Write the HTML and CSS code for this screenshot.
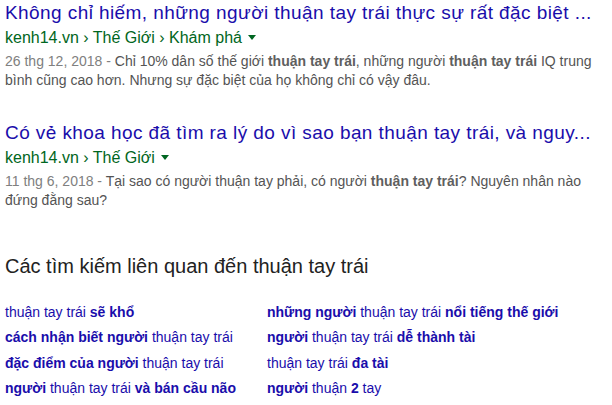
FILE: index.html
```html
<!DOCTYPE html>
<html lang="vi">
<head>
<meta charset="utf-8">
<title>thuận tay trái</title>
<link rel="stylesheet" href="styles.css">
</head>
<body>
<div class="page">
  <div class="result first">
    <a class="title" href="#">Không chỉ hiếm, những người thuận tay trái thực sự rất đặc biệt ...</a>
    <div class="url">kenh14.vn › Thế Giới › Khám phá<span class="caret"></span></div>
    <div class="snippet"><span class="date">26 thg 12, 2018 - </span>Chỉ 10% dân số thế giới <b>thuận tay trái</b>, những người <b>thuận tay trái</b> IQ trung bình cũng cao hơn. Nhưng sự đặc biệt của họ không chỉ có vậy đâu.</div>
  </div>
  <div class="result second">
    <a class="title" href="#">Có vẻ khoa học đã tìm ra lý do vì sao bạn thuận tay trái, và nguy...</a>
    <div class="url">kenh14.vn › Thế Giới<span class="caret"></span></div>
    <div class="snippet"><span class="date">11 thg 6, 2018 - </span>Tại sao có người thuận tay phải, có người <b>thuận tay trái</b>? Nguyên nhân nào đứng đằng sau?</div>
  </div>
  <div class="related">
    <h3 class="related-head">Các tìm kiếm liên quan đến thuận tay trái</h3>
    <div class="related-grid">
      <a href="#">thuận tay trái <b>sẽ khổ</b></a>
      <a href="#"><b>những người</b> thuận tay trái <b>nổi tiếng thế giới</b></a>
      <a href="#"><b>cách nhận biết người</b> thuận tay trái</a>
      <a href="#"><b>người</b> thuận tay trái <b>dễ thành tài</b></a>
      <a href="#"><b>đặc điểm của người</b> thuận tay trái</a>
      <a href="#">thuận tay trái <b>đa tài</b></a>
      <a href="#"><b>người</b> thuận tay trái <b>và bán cầu não</b></a>
      <a href="#"><b>người</b> thuận <b>2</b> tay</a>
    </div>
  </div>
</div>
</body>
</html>
```

FILE: styles.css
```css
html, body {
  margin: 0;
  padding: 0;
  background: #fff;
}
body {
  font-family: "Liberation Sans", Arial, sans-serif;
  width: 612px;
  height: 405px;
  overflow: hidden;
}
.page {
  padding: 1px 0 0 5px;
}
.result {
  display: flex;
  flex-direction: column;
  width: 600px;
}
.result.second {
  margin-top: 31px;
}
.title {
  font-size: 19px;
  letter-spacing: 0.42px;
  line-height: 24px;
  color: #1a0dab;
  text-decoration: none;
  white-space: nowrap;
}
.url {
  margin-top: 1px;
  font-size: 16px;
  line-height: 24px;
  color: #006621;
  white-space: nowrap;
}
.caret {
  display: inline-block;
  width: 0;
  height: 0;
  border-left: 4px solid transparent;
  border-right: 4px solid transparent;
  border-top: 5px solid #006621;
  margin-left: 6px;
  vertical-align: middle;
  position: relative;
  top: -1px;
}
.snippet {
  margin-top: 2px;
  font-size: 14px;
  line-height: 19px;
  color: #545454;
  width: 592px;
}
.snippet b {
  color: #5f5f5f;
}
.date {
  color: #808080;
}
.related {
  margin-top: 43px;
}
.related-head {
  margin: 0;
  font-size: 20px;
  font-weight: normal;
  line-height: 26px;
  color: #222;
}
.related-grid {
  margin-top: 21px;
  display: grid;
  grid-template-columns: 262px auto;
  grid-auto-rows: 25.4px;
}
.related-grid a {
  font-size: 14px;
  line-height: 25.4px;
  color: #1a0dab;
  text-decoration: none;
  white-space: nowrap;
}
```
